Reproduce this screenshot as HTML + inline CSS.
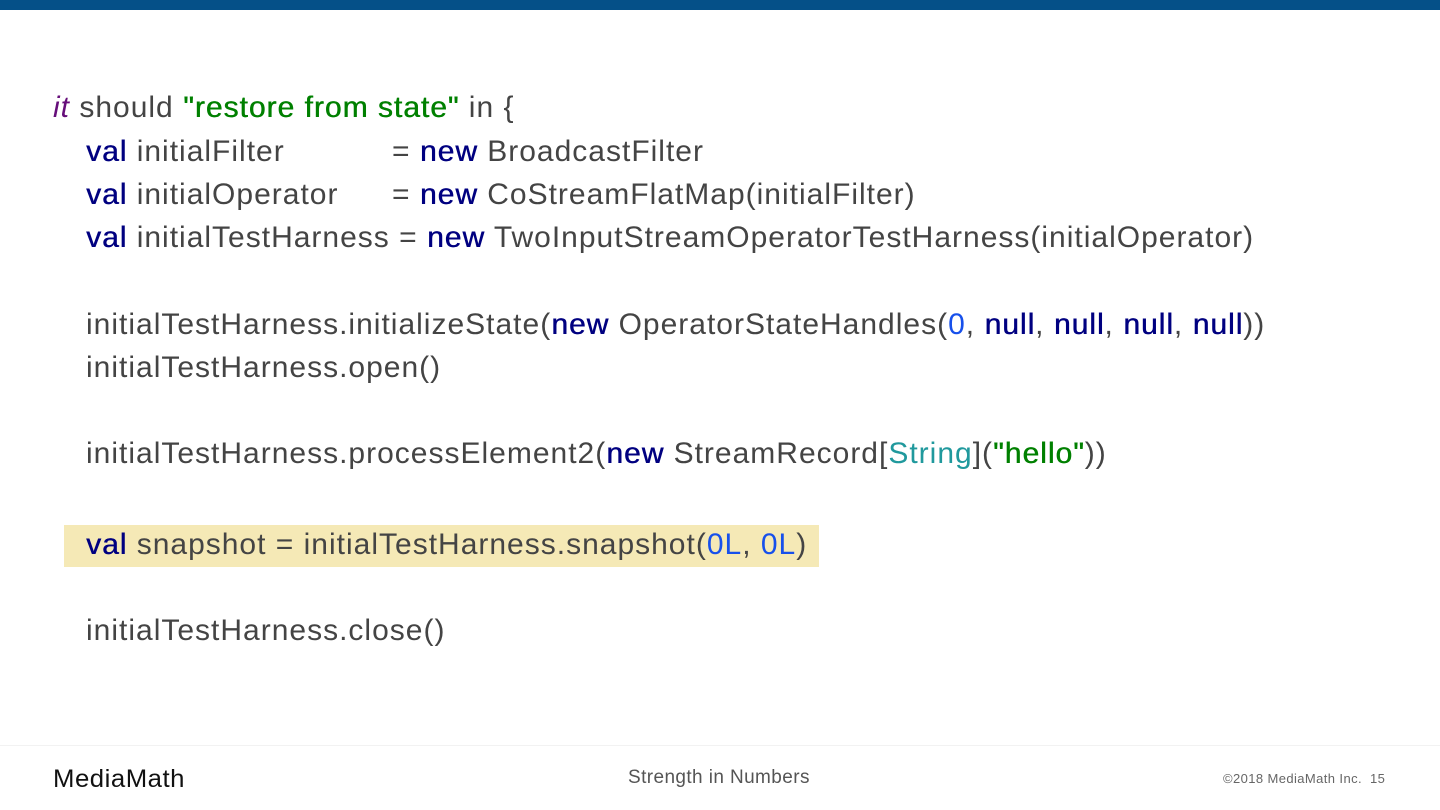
<!DOCTYPE html>
<html><head><meta charset="utf-8"><style>
body{margin:0;width:1440px;height:810px;position:relative;background:#fff;overflow:hidden;font-family:"Liberation Sans",sans-serif}
.bar{position:absolute;left:0;top:0;width:1440px;height:10px;background:#055088}
.l{position:absolute;left:86px;font-size:30px;letter-spacing:1px;color:#444;white-space:pre;line-height:36px}
.k{color:#000080;text-shadow:0.5px 0 0 #000080}
.s{color:#008000;text-shadow:0.5px 0 0 #008000}
.n{color:#1750eb}
.t{color:#20999d}
.i{color:#660e7a;font-style:italic}
.w{display:inline-block}
.hl{position:absolute;left:64px;top:525px;width:755px;height:42px;background:#f5e9b6}
.fl{position:absolute;left:0;top:745px;width:1440px;height:1px;background:#f2f2f2}
</style></head><body>
<div class="bar"></div>
<div class="hl"></div>
<div class="l" style="left:53px;top:90px"><span class="i">it</span> should <span class="s">"restore from state"</span> in {</div>
<div class="l" style="top:134px"><span class="w" style="width:306px"><span class="k">val</span> initialFilter</span>= <span class="k">new</span> BroadcastFilter</div>
<div class="l" style="top:177px"><span class="w" style="width:306px"><span class="k">val</span> initialOperator</span>= <span class="k">new</span> CoStreamFlatMap(initialFilter)</div>
<div class="l" style="top:220px"><span class="k">val</span> initialTestHarness = <span class="k">new</span> TwoInputStreamOperatorTestHarness(initialOperator)</div>
<div class="l" style="top:307px">initialTestHarness.initializeState(<span class="k">new</span> OperatorStateHandles(<span class="n">0</span>, <span class="k">null</span>, <span class="k">null</span>, <span class="k">null</span>, <span class="k">null</span>))</div>
<div class="l" style="top:350px">initialTestHarness.open()</div>
<div class="l" style="top:436px">initialTestHarness.processElement2(<span class="k">new</span> StreamRecord[<span class="t">String</span>](<span class="s">"hello"</span>))</div>
<div class="l" style="top:527px"><span class="k">val</span> snapshot = initialTestHarness.snapshot(<span class="n">0L</span>, <span class="n">0L</span>)</div>
<div class="l" style="top:613px">initialTestHarness.close()</div>
<div class="fl"></div>
<div style="position:absolute;left:53px;top:765px;font-size:25px;color:#111;letter-spacing:0.5px;transform:scaleX(1.03);transform-origin:left">MediaMath</div>
<div style="position:absolute;left:628px;top:767px;font-size:19px;color:#555;letter-spacing:0.4px">Strength in Numbers</div>
<div style="position:absolute;left:1223px;top:771px;font-size:13px;color:#666;letter-spacing:0.4px">©2018 MediaMath Inc.&nbsp; 15</div>
</body></html>
